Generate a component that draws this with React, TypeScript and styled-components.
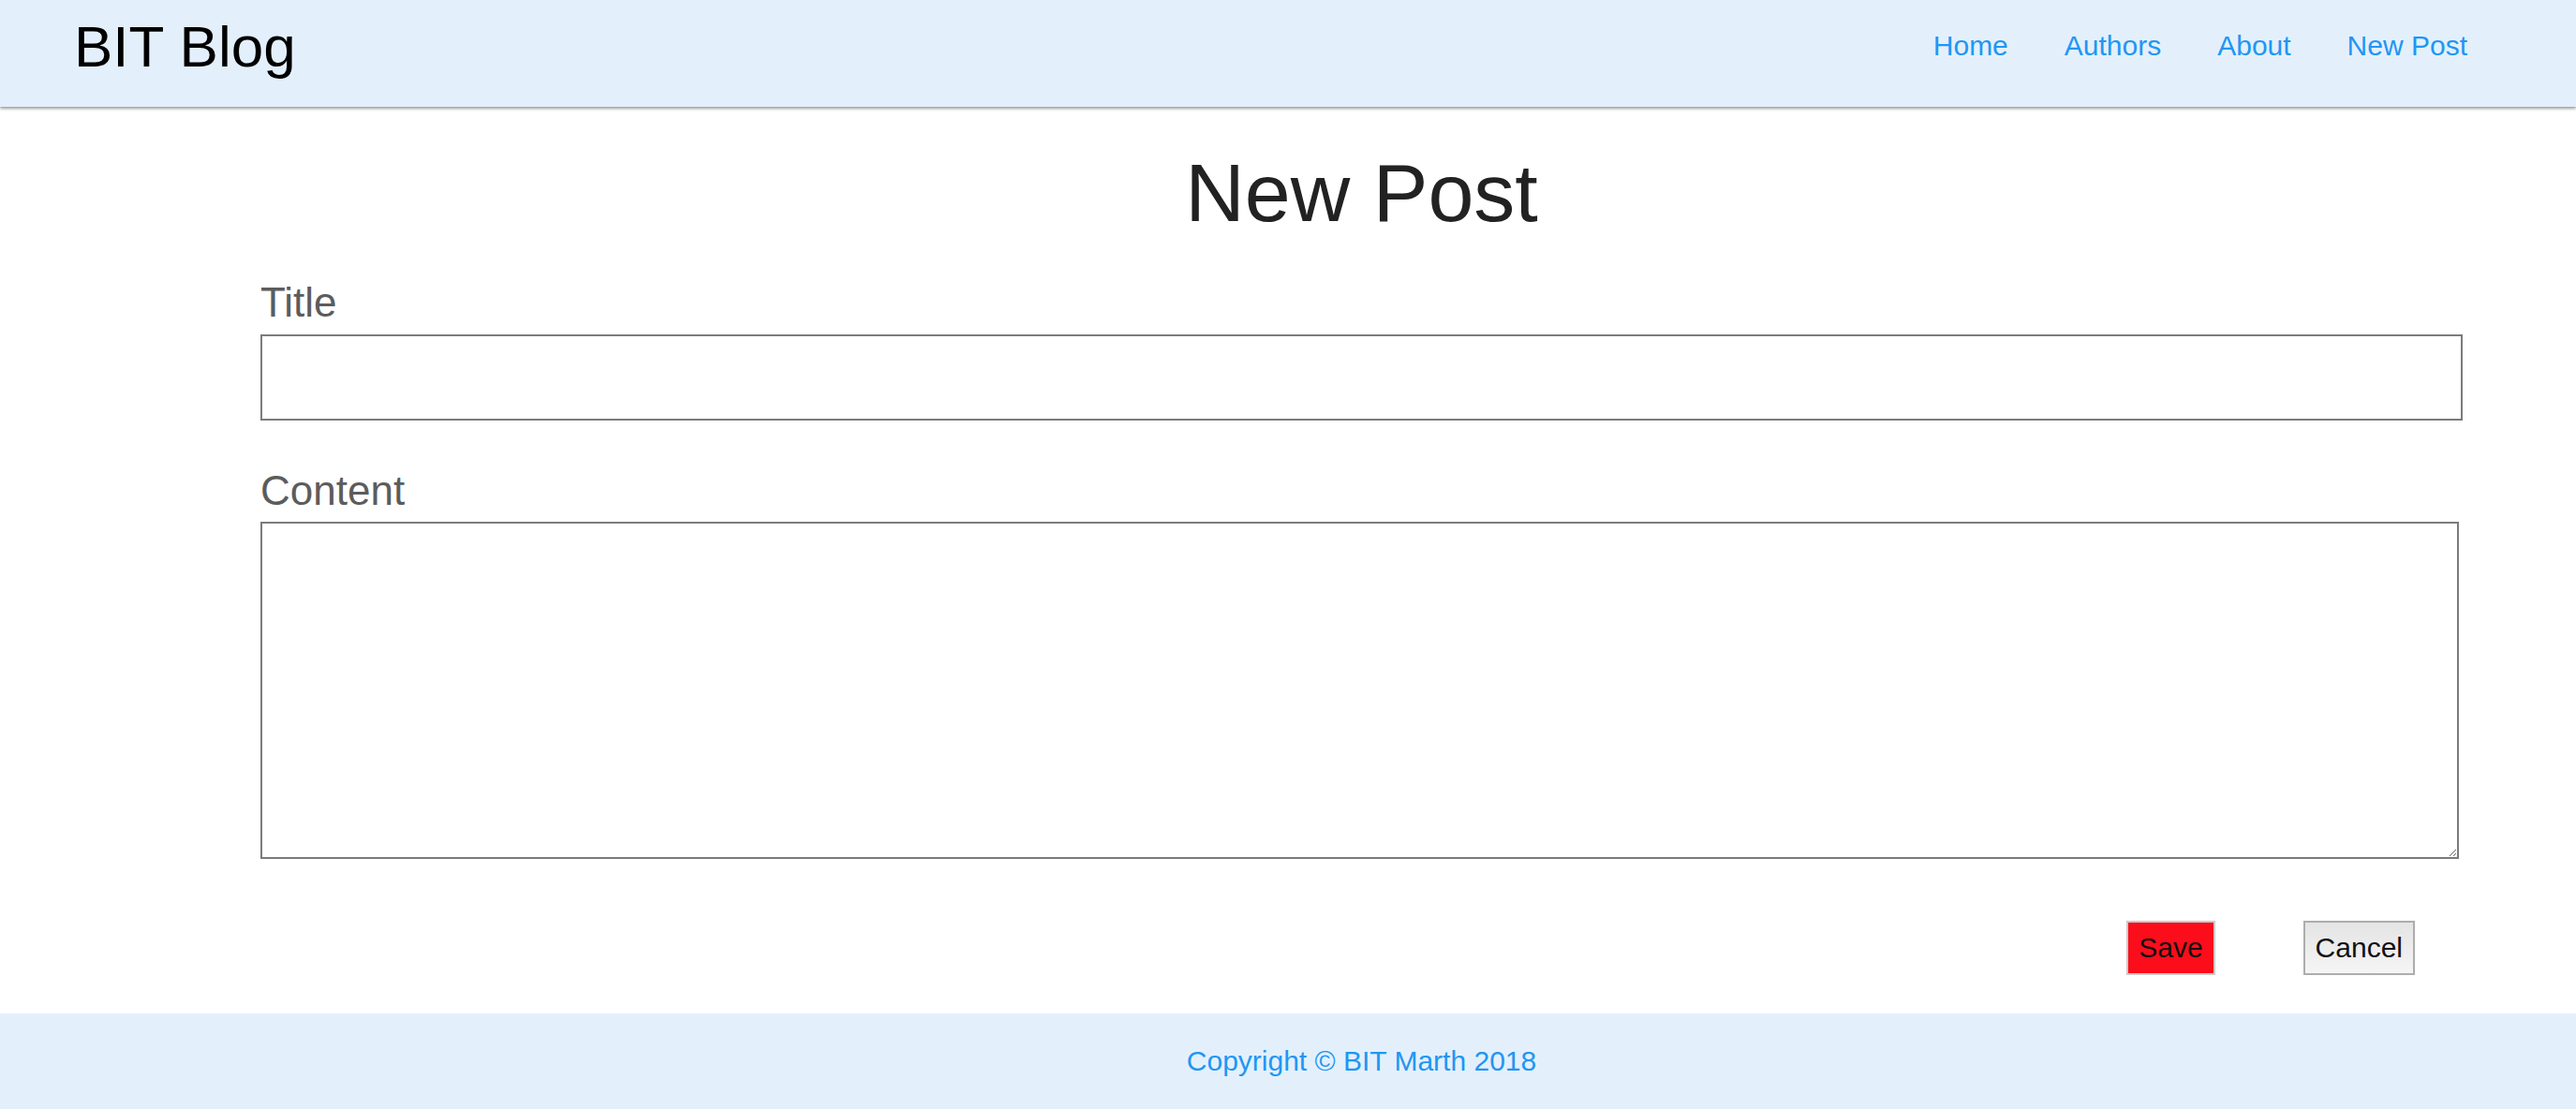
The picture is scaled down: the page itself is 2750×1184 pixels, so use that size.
import React from "react";
import styled, { createGlobalStyle } from "styled-components";

const GlobalStyle = createGlobalStyle`
  html, body {
    margin: 0;
    padding: 0;
    background: #ffffff;
    font-family: "Liberation Sans", Arial, Helvetica, sans-serif;
  }
  * {
    box-sizing: border-box;
  }
`;

const Page = styled.div`
  min-height: 100vh;
  display: flex;
  flex-direction: column;
`;

const Header = styled.header`
  height: 114px;
  padding: 0 116px 15px 79px;
  display: flex;
  align-items: center;
  justify-content: space-between;
  background: #e3f0fc;
  box-shadow: 0 2px 3px rgba(0, 0, 0, 0.4);
  position: relative;
  z-index: 1;
`;

const Brand = styled.div`
  font-size: 62px;
  line-height: 1.15;
  color: #000000;
`;

const Nav = styled.nav`
  display: flex;
  gap: 60px;
`;

const NavLink = styled.a`
  font-size: 30px;
  line-height: 1.15;
  color: #2196f3;
  text-decoration: none;
  cursor: pointer;
`;

const Main = styled.main`
  padding: 41px 121px 40px 278px;
`;

const Heading = styled.h1`
  margin: 0 0 42px;
  font-size: 88px;
  font-weight: normal;
  line-height: 1.15;
  text-align: center;
  color: #222222;
`;

const Field = styled.div<{ $gap: number }>`
  margin-bottom: ${(p) => p.$gap}px;
`;

const Label = styled.label`
  display: block;
  margin-bottom: 8px;
  font-size: 44px;
  line-height: 1.15;
  color: #5c5c5c;
`;

const TextInput = styled.input`
  display: block;
  width: 100%;
  height: 92px;
  margin: 0;
  padding: 0 12px;
  border: 2px solid #7b7b7b;
  border-radius: 0;
  font-family: inherit;
  font-size: 30px;
  outline: none;
  background: #ffffff;
`;

const TextArea = styled.textarea`
  display: block;
  width: calc(100% - 4px);
  height: 360px;
  margin: 0;
  padding: 8px 12px;
  border: 2px solid #7b7b7b;
  border-radius: 0;
  font-family: inherit;
  font-size: 30px;
  outline: none;
  background: #ffffff;
`;

const Actions = styled.div`
  display: flex;
  justify-content: flex-end;
  gap: 94px;
  padding-right: 51px;
`;

const Button = styled.button<{ $variant: "save" | "cancel" }>`
  height: 58px;
  padding: 0 11px;
  font-family: inherit;
  font-size: 30px;
  color: #111111;
  border-radius: 0;
  cursor: pointer;
  border: 2px solid ${(p) => (p.$variant === "save" ? "#cacaca" : "#adadad")};
  background: ${(p) =>
    p.$variant === "save"
      ? "#fb0d1c"
      : "linear-gradient(#e4e4e4, #f5f5f5)"};
`;

const Footer = styled.footer`
  margin-top: auto;
  height: 102px;
  padding: 0 121px 0 278px;
  display: flex;
  align-items: center;
  justify-content: center;
  background: #e3f0fc;
  color: #2196f3;
  font-size: 30px;
`;

export default function App() {
  return (
    <Page>
      <GlobalStyle />
      <Header>
        <Brand>BIT Blog</Brand>
        <Nav>
          <NavLink>Home</NavLink>
          <NavLink>Authors</NavLink>
          <NavLink>About</NavLink>
          <NavLink>New Post</NavLink>
        </Nav>
      </Header>
      <Main>
        <Heading>New Post</Heading>
        <Field $gap={50}>
          <Label htmlFor="title">Title</Label>
          <TextInput id="title" type="text" />
        </Field>
        <Field $gap={66}>
          <Label htmlFor="content">Content</Label>
          <TextArea id="content" />
        </Field>
        <Actions>
          <Button $variant="save">Save</Button>
          <Button $variant="cancel">Cancel</Button>
        </Actions>
      </Main>
      <Footer>Copyright © BIT Marth 2018</Footer>
    </Page>
  );
}
